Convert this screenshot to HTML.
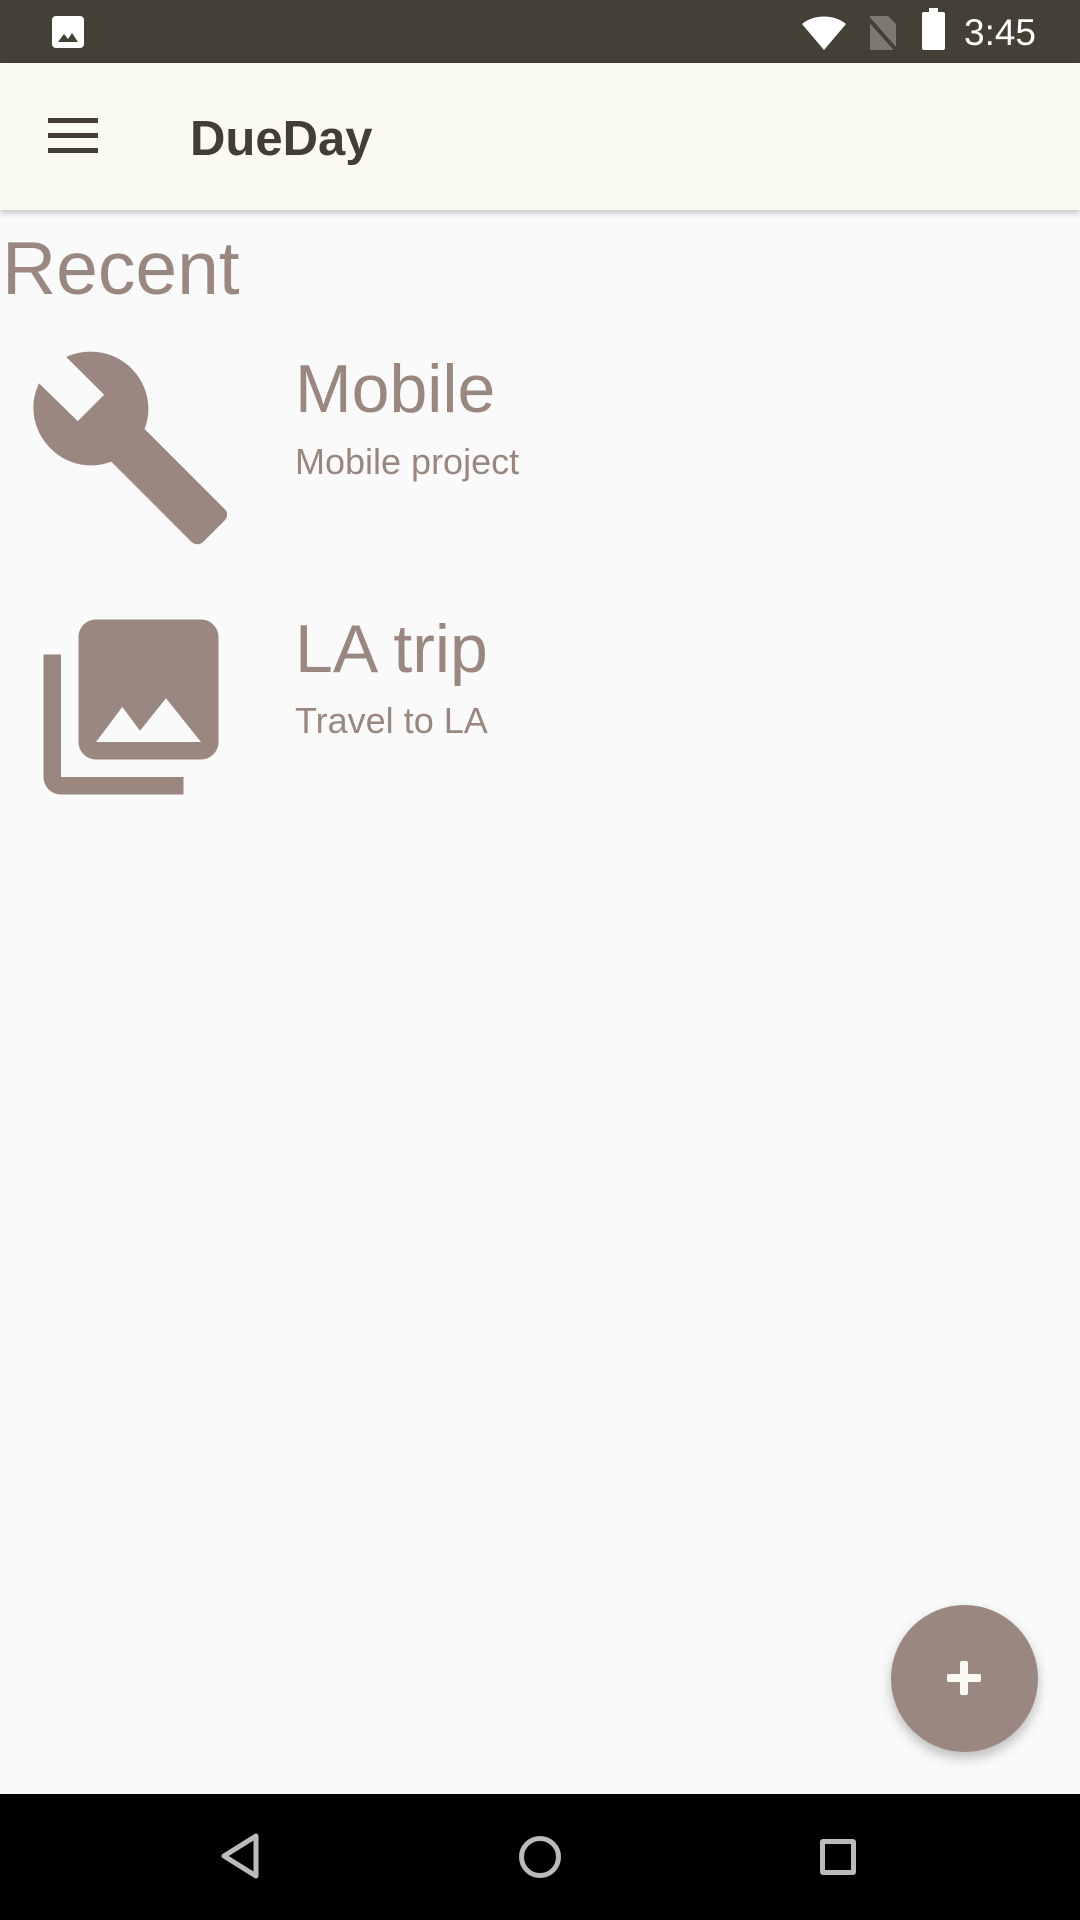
<!DOCTYPE html>
<html><head><meta charset="utf-8"><style>
*{margin:0;padding:0;box-sizing:border-box}
body{width:1080px;height:1920px;background:#fafafa;position:relative;overflow:hidden;font-family:"Liberation Sans",Roboto,sans-serif}
.abs{position:absolute}
.t{color:#9a8880;white-space:nowrap;line-height:1}
</style></head><body>
<div class="abs" style="left:0;top:0;width:1080px;height:63px;background:#454035"></div>
<svg class="abs" style="left:50px;top:14px" width="36" height="36" viewBox="0 0 36 36"><rect x="2" y="2" width="32" height="32" rx="4" fill="#fff"/><path d="M8 28l6-8 4 5 4-6 6 9z" fill="#454035"/></svg>
<svg class="abs" style="left:800px;top:12px" width="48" height="40" viewBox="0 0 48 40"><path d="M24 38L2 12C14 2 34 2 46 12z" fill="#fff"/></svg>
<svg class="abs" style="left:864px;top:14px" width="36" height="38" viewBox="0 0 36 38"><path d="M6 2h18l8 8v26H6z" fill="#7d7870"/><path d="M2 2L34 38" stroke="#454035" stroke-width="4"/></svg>
<div class="abs" style="left:922px;top:12px;width:23px;height:38px;background:#fff;border-radius:2px"></div>
<div class="abs" style="left:929px;top:8px;width:9px;height:6px;background:#fff"></div>
<div class="abs" style="left:964px;top:13px;color:#fff;font-size:37px;line-height:40px">3:45</div>
<div class="abs" style="left:0;top:63px;width:1080px;height:147px;background:#fafaf2;box-shadow:0 3px 6px rgba(0,0,0,.22)"></div>
<div class="abs" style="left:48px;top:118px;width:50px;height:5px;background:#433d35"></div>
<div class="abs" style="left:48px;top:133px;width:50px;height:5px;background:#433d35"></div>
<div class="abs" style="left:48px;top:148px;width:50px;height:5px;background:#433d35"></div>
<div class="abs" style="left:190px;top:115px;font-size:49px;font-weight:bold;color:#433d35;line-height:1">DueDay</div>
<div class="abs t" style="left:2px;top:231px;font-size:75px">Recent</div>
<svg class="abs" style="left:25px;top:342px" width="211" height="211" viewBox="0 0 24 24"><path fill="#9a8880" d="M22.7 19l-9.1-9.1c.9-2.3.4-5-1.5-6.9-2-2-5-2.4-7.4-1.3L9 6 6 9 1.6 4.7C.4 7.1.9 10.1 2.9 12.1c1.9 1.9 4.6 2.4 6.9 1.5l9.1 9.1c.4.4 1 .4 1.4 0l2.3-2.3c.5-.4.5-1.1.1-1.4z"/></svg>
<div class="abs t" style="left:295px;top:355px;font-size:68px">Mobile</div>
<div class="abs t" style="left:295px;top:444px;font-size:36px">Mobile project</div>
<svg class="abs" style="left:26px;top:602px" width="210" height="210" viewBox="0 0 24 24"><path fill="#9a8880" d="M22 16V4c0-1.1-.9-2-2-2H8c-1.1 0-2 .9-2 2v12c0 1.1.9 2 2 2h12c1.1 0 2-.9 2-2zm-11-4l2.03 2.71L16 11l4 5H8l3-4zM2 6v14c0 1.1.9 2 2 2h14v-2H4V6H2z"/></svg>
<div class="abs t" style="left:295px;top:615px;font-size:68px">LA trip</div>
<div class="abs t" style="left:295px;top:703px;font-size:36px">Travel to LA</div>
<div class="abs" style="left:891px;top:1605px;width:147px;height:147px;border-radius:50%;background:#9a8880;box-shadow:0 6px 12px rgba(0,0,0,.25)"></div>
<div class="abs" style="left:947px;top:1674px;width:34px;height:8px;background:#fafaf2;border-radius:2px"></div>
<div class="abs" style="left:960px;top:1661px;width:8px;height:34px;background:#fafaf2;border-radius:2px"></div>
<div class="abs" style="left:0;top:1794px;width:1080px;height:126px;background:#000"></div>
<svg class="abs" style="left:216px;top:1830px" width="50" height="52" viewBox="0 0 50 52"><path d="M40 6L8 26l32 20z" fill="none" stroke="#bbb" stroke-width="5" stroke-linejoin="round"/></svg>
<div class="abs" style="left:519px;top:1836px;width:42px;height:42px;border:5px solid #bbb;border-radius:50%"></div>
<div class="abs" style="left:820px;top:1839px;width:36px;height:36px;border:5px solid #bbb;border-radius:3px"></div>
</body></html>
